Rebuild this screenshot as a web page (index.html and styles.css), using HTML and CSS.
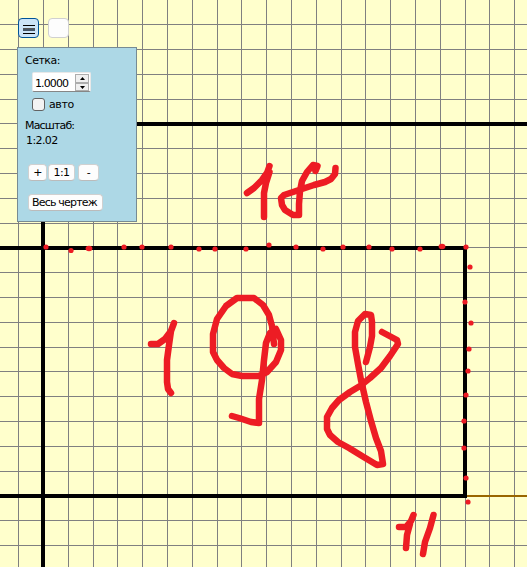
FILE: index.html
```
<!DOCTYPE html>
<html lang="ru">
<head>
<meta charset="utf-8">
<title>Чертеж</title>
<link rel="stylesheet" href="styles.css">
</head>
<body>
<main class="board">
<svg class="drawing" viewBox="0 0 527 567" width="527" height="567">
  <path class="grid" d="M18.5 0V567M68.5 0V567M93.5 0V567M117.5 0V567M142.5 0V567M167.5 0V567M192.5 0V567M217.5 0V567M241.5 0V567M266.5 0V567M291.5 0V567M316.5 0V567M341.5 0V567M365.5 0V567M390.5 0V567M415.5 0V567M440.5 0V567M465.5 0V567M489.5 0V567M514.5 0V567M43.5 0V567"/>
  <path class="grid" d="M0 24.5H527M0 49.5H527M0 74.5H527M0 99.5H527M0 123.5H527M0 148.5H527M0 173.5H527M0 198.5H527M0 223.5H527M0 247.5H527M0 272.5H527M0 297.5H527M0 322.5H527M0 347.5H527M0 371.5H527M0 396.5H527M0 421.5H527M0 446.5H527M0 471.5H527M0 520.5H527M0 545.5H527"/>
  <path class="axis" d="M467 496H527"/>
  <path class="wall" d="M43 124H527M43 122V567M0 248H465V496H0"/>
  <g class="ink">
    <path d="M247 193L254 188L262 180L267 173L269.500 166M269.500 172L266 183L264 193L264 217"/>
    <path d="M315.500 171L317.500 166L313 165L307 172L302 181L300 191L299 204L299 215L293 215L285 210L282 205L281 198L284 195L293 192L302 189L314 185L325 182L331 179L335 174L335.500 168"/>
    <path d="M151 344L158 344L165 339L171 331L174 323M171 331L169 345L167 360L167 382L168 389L171 393"/>
    <path d="M274 344L272 326L269 315L263 305L254 298L237 298L226 306L217 319L213 334L213 352L217 360L224 368L232 374L242 376L259 376L267 372L276 362L281 350L281 340L276 329L270 333L266 343L264 360L262 380L259 399L259 423L251 422L239 418L232 416"/>
    <path d="M366 362L370 347L372 336L372 322L371 315L365 314L358 321L355 332L355 347L358 364L361 380L366 402L371 421L376 438L381 451L383 464L377 465L362 456L349 448L338 442L330 435L327 429L327 417L332 408L339 400L350 392L360 386L370 378L381 368L390 356L398 344L397 340L382 332"/>
    <path d="M399 527L406 527L411 521L413.500 515M410 524L407 535L406 548M433.500 515L430 528L425 542L423 554"/>
  </g>
  <g class="dots">
    <circle cx="46" cy="247" r="2.6"/><circle cx="71" cy="250.5" r="2.6"/><ellipse cx="89" cy="248.5" rx="3.4" ry="2.7"/><circle cx="124" cy="247" r="2.6"/><circle cx="142" cy="247" r="2.6"/><circle cx="171" cy="247" r="2.6"/><circle cx="199" cy="249" r="2.6"/><circle cx="215" cy="249" r="2.6"/><circle cx="246" cy="249" r="2.6"/><circle cx="269" cy="245" r="2.6"/><circle cx="296" cy="247" r="2.6"/><circle cx="323" cy="249" r="2.6"/><circle cx="343" cy="247" r="2.6"/><circle cx="369" cy="247" r="2.6"/><circle cx="392" cy="249" r="2.6"/><circle cx="420" cy="249" r="2.6"/><ellipse cx="442" cy="246.5" rx="3.4" ry="2.7"/><circle cx="466" cy="247" r="2.6"/><circle cx="470" cy="267" r="2.6"/><circle cx="465" cy="302" r="2.6"/><circle cx="471" cy="323" r="2.6"/><circle cx="469" cy="349" r="2.6"/><circle cx="468" cy="371" r="2.6"/><circle cx="466" cy="395" r="2.6"/><circle cx="464" cy="421" r="2.6"/><circle cx="464" cy="448" r="2.6"/><circle cx="466" cy="478" r="2.6"/><circle cx="468" cy="502" r="2.6"/>
  </g>
</svg>
<div class="overlay">
  <div class="toolbar">
    <button class="tool tool-active" aria-label="Меню"><svg width="12" height="9" viewBox="0 0 12 9"><path d="M0 .5H12M0 8.5H12" stroke="#000"/><path d="M0 3.5H12" stroke="#555"/><path d="M0 5H12" stroke="#456" stroke-width="2"/></svg></button>
    <button class="tool" aria-label="Инструмент"></button>
  </div>
  <section class="panel">
    <div class="label grid-label">Сетка:</div>
    <div class="spinner"><span class="value">1.0000</span><span class="steps"><i class="step"><svg width="5" height="3"><path d="M0 3L2.5 0L5 3Z"/></svg></i><i class="step"><svg width="5" height="3"><path d="M0 0H5L2.5 3Z"/></svg></i></span></div>
    <div class="auto"><span class="check"></span><span class="auto-text">авто</span></div>
    <div class="label scale-label">Масштаб:</div>
    <div class="scale">1:2.02</div>
    <div class="zoom"><button class="btn plus">+</button><button class="btn one">1:1</button><button class="btn minus">-</button></div>
    <button class="btn all">Весь чертеж</button>
  </section>
</div>
</main>
</body>
</html>
```
FILE: styles.css
```
* { box-sizing: border-box; }
body { margin: 0; background: #ffffcc; overflow: hidden; }
.board { position: relative; width: 527px; height: 567px; overflow: hidden; font: 11px/15px "DejaVu Sans", Tahoma, sans-serif; color: #000; }
.drawing { display: block; }
.grid { stroke: #808080; stroke-width: 1; fill: none; shape-rendering: crispEdges; }
.axis { stroke: #996600; stroke-width: 2; }
.wall { stroke: #000; stroke-width: 4; fill: none; }
.ink { stroke: #ed1c24; stroke-width: 6.5; stroke-linecap: round; stroke-linejoin: round; fill: none; }
.dots { fill: #ed1c24; }
.overlay { position: absolute; top: 18px; left: 17px; }
.toolbar { display: flex; gap: 9px; height: 29px; padding-left: 1px; }
.tool { width: 21px; height: 20px; padding: 0; display: flex; align-items: center; justify-content: center; border: 1px solid #d0d0d0; border-radius: 4px; background: #fdfdfd; }
.tool svg { margin-top: 2px; }
.tool-active { border-color: #005499; background: #cce4f7; }
.panel { width: 120px; height: 175px; padding: 5px 0 0 7px; border: 1px solid #778b93; background: #add8e6; }
.label { letter-spacing: -0.5px; white-space: nowrap; }
.scale-label { margin-top: 6px; letter-spacing: -0.85px; }
.spinner { display: flex; width: 59px; height: 20px; margin: 4px 0 0 7px; padding-left: 2px; background: #fff; border: 1px solid #e8e8e8; border-bottom-color: #868686; border-radius: 2px; }
.value { width: 40px; line-height: 21px; letter-spacing: -0.9px; }
.steps { display: grid; grid-template-rows: 9px 8px; width: 14px; margin-top: 1px; }
.step { display: flex; align-items: center; justify-content: center; background: #f0f0f0; border: 1px solid #adadad; }
.auto { display: flex; align-items: center; gap: 4px; height: 15px; margin: 5px 0 0 7px; letter-spacing: -0.4px; }
.check { width: 13px; height: 13px; border: 1px solid #626262; border-radius: 3px; background: #f3f3f3; }
.scale { padding-left: 1px; letter-spacing: -0.6px; }
.zoom { display: flex; height: 16px; margin: 16px 0 0 3px; }
.btn { height: 17px; padding: 0; border: 1px solid #d0d0d0; border-bottom-color: #bbb; border-radius: 4px; background: #fdfdfd; color: #000; font: inherit; letter-spacing: -0.5px; text-align: center; white-space: nowrap; }
.plus { width: 19px; }
.one { width: 27px; margin-left: 1px; }
.minus { width: 21px; margin-left: 3px; }
.all { display: block; width: 75px; margin: 14px 0 0 3px; padding-left: 3px; text-align: left; letter-spacing: -0.8px; }
```
